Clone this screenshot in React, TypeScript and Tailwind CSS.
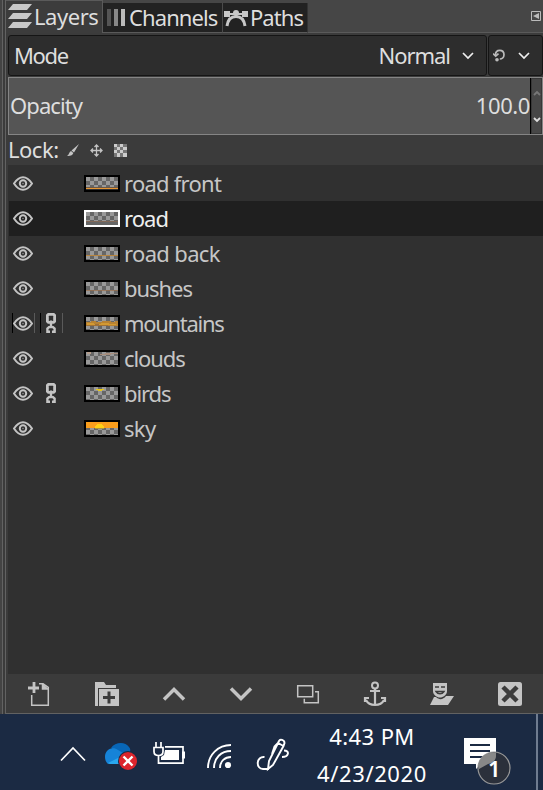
import React from "react";

const font = "font-['Noto_Sans',sans-serif]";

function Eye() {
  return (
    <svg width="20" height="15" viewBox="0 0 20 15" fill="none" stroke="#c4c4c4" strokeWidth="2">
      <path d="M1 7.5C4 3 7 1.2 10 1.2S16 3 19 7.5C16 12 13 13.8 10 13.8S4 12 1 7.5Z" />
      <circle cx="10" cy="7.5" r="3.2" />
      <circle cx="10" cy="7.5" r="0.7" fill="#aaa" stroke="none" />
    </svg>
  );
}

function Chain() {
  return (
    <svg width="10" height="20" viewBox="0 0 10 20" fill="none" stroke="#c4c4c4" strokeWidth="2.8">
      <path d="M2.4 1.4H7.6L8.6 2.4V8.4L7.6 9.4H2.4L1.4 8.4V2.4Z" />
      <path d="M5 7.5V14.5" strokeWidth="2.4" />
      <path d="M4 18.8H1.4V15.6L3 14.1H7L8.6 15.6V18.8H6" strokeWidth="2.4" />
    </svg>
  );
}

function Thumb({ name }: { name: string }) {
  const cells: React.ReactNode[] = [];
  for (let y = 0; y < 4; y++)
    for (let x = 0; x < 8; x++)
      cells.push(<rect key={`${x}-${y}`} x={2 + x * 4} y={2 + y * 4} width="4" height={y === 3 ? 1 : 4} fill={(x + y) % 2 ? "#666" : "#999"} />);
  return (
    <svg width="36" height="17" viewBox="0 0 36 17" shapeRendering="crispEdges" className="shrink-0">
      <rect width="36" height="17" fill={name === "road" ? "#fff" : "#000"} />
      {cells}
      {name === "road front" && <path d="M2 12h32v1H2z" fill="#6b5947" />}
      {name === "road front" && <path d="M2 13h32v1H2z" fill="#e79634" />}
      {name === "road front" && <path d="M2 14h32v1H2z" fill="#333" />}
      {name === "road" && <><path d="M2 11h32v4H2z" fill="#666" /><path d="M2 11h32v1H2z" fill="#806858" /></>}
      {name === "road back" && <path d="M2 10h32v1H2z" fill="#b7843e" />}
      {name === "bushes" && <path d="M2 10h32v1H2z" fill="#99704f" opacity=".75" />}
      {name === "mountains" && <><path d="M2 7h5v-1h5v1h6v-1h9v1h4v-1h3v5H2z" fill="#b88232" /><path d="M3 8h7v1h7v-1h8v1h7v1H3z" fill="#d39a32" /><path d="M2 10h9v-1h4v1h9v1H2z" fill="#a07034" /></>}
      {name === "clouds" && <><path d="M3 2h4v2H3z" fill="#b39b8a" /><path d="M16 4h5V3h13v1h-7v1H16z" fill="#a58c7c" /></>}
      {name === "birds" && <path d="M12 4h8v1h-2v1h-4V5h-2z" fill="#e8c715" />}
      {name === "sky" && <><path d="M2 2h32v6H2z" fill="#f99d1c" /><path d="M11 8V6h1V5h1V4h5v1h1v1h1v2z" fill="#ffcf15" /><path d="M11 8h9v1h-9z" fill="#a89342" /></>}
    </svg>
  );
}

const layers = [
  { name: "road front", track: "tracking-[-0.75px]" },
  { name: "road", track: "tracking-[-0.95px]" },
  { name: "road back", track: "tracking-[-0.65px]" },
  { name: "bushes", track: "tracking-[-1.05px]" },
  { name: "mountains", track: "tracking-[-1.3px]", chain: true, cells: true },
  { name: "clouds", track: "tracking-[-1.1px]" },
  { name: "birds", track: "tracking-[-1.1px]", chain: true },
  { name: "sky", track: "tracking-[-0.7px]" },
];

function Chevron() {
  return (
    <svg width="12" height="8" viewBox="0 0 12 8" fill="none" stroke="#eee" strokeWidth="1.7">
      <path d="M1 1L6 6L11 1" />
    </svg>
  );
}

function Tabs() {
  return (
    <div className="flex h-[33px] shrink-0 bg-[#464646] text-[22px] leading-[30px] text-[#dedede]">
      <div className="flex w-[97px] shrink-0 border-r border-t border-[#5a5a5a] bg-[#3c3c3c] pl-[2px]">
        <svg width="24" height="26" viewBox="0 0 24 26" className="mt-[2px]" fill="#c8c8c8">
          <path d="M5 1H24L19 7H0ZM5 10H24L19 16H0ZM5 19H24L19 25H0Z" />
        </svg>
        <span className="ml-[2px] tracking-[-0.45px]">Layers</span>
      </div>
      <div className="mt-[3px] flex w-[120px] shrink-0 border-b border-r border-b-[#5a5a5a] border-r-[#4b4b4b] bg-[#222] pl-[4px]">
        <svg width="18" height="17" viewBox="0 0 18 17" className="mt-[6px]">
          <path d="M0 0h4v17H0z" fill="#555" /><path d="M7 0h4v17H7z" fill="#888" /><path d="M14 0h4v17h-4z" fill="#bbb" />
        </svg>
        <span className="-mt-px ml-[4px] tracking-[-0.9px]">Channels</span>
      </div>
      <div className="mt-[3px] flex w-[85px] shrink-0 border-b border-r border-b-[#5a5a5a] border-r-[#333] bg-[#222] pl-px">
        <svg width="24" height="17" viewBox="0 0 24 17" className="mt-[7px]" fill="#c8c8c8">
          <path d="M0 1h6v6H0zM18 1h6v6h-6zM6 3h12v2H6z" /><circle cx="12" cy="3" r="3" />
          <path d="M3 16C4 9 8 6.5 12 6.5S20 9 21 16" fill="none" stroke="#c8c8c8" strokeWidth="3" />
        </svg>
        <span className="-mt-px ml-[2px] tracking-[-0.95px]">Paths</span>
      </div>
      <div className="flex flex-1 justify-end border-b border-[#5a5a5a] pr-[2px] pt-[11px]">
        <svg width="10" height="10" viewBox="0 0 10 10"><path d="M.5.5h9v9h-9z" fill="none" stroke="#bbb" /><path d="M8 2v6L2 5z" fill="#bbb" /></svg>
      </div>
    </div>
  );
}

function Controls() {
  return (
    <div className="shrink-0 pl-[2px] text-[22px] leading-[30px] text-[#dedede]">
      <div className="flex h-[44px] gap-px pt-[2px]">
        <div className="flex h-[41px] w-[479px] items-center rounded-[3px] border border-[#151515] bg-[#2d2d2d] pl-[5px] pr-[12px]">
          <span className="-mt-[2px] flex-1 tracking-[-1.35px]">Mode</span>
          <span className="-mt-[2px] mr-[12px] tracking-[-1.05px]">Normal</span>
          <Chevron />
        </div>
        <div className="flex h-[41px] flex-1 items-center rounded-[3px] border border-[#151515] bg-[#2d2d2d] pl-[4px]">
          <svg width="13" height="13" viewBox="0 0 13 13" fill="none" stroke="#bbb" strokeWidth="1.7">
            <path d="M2.5 6C2.5 2.8 4 1.3 6.7 1.3C9.5 1.3 11 3.4 11 5.8C11 8.3 9 10 6.8 10" /><path d="M0 4.7L2.7 7.2L5.5 4.7" /><circle cx="4" cy="10.7" r="1.8" fill="#bbb" stroke="none" />
          </svg>
          <span className="ml-[12px]"><Chevron /></span>
        </div>
      </div>
      <div className="flex h-[58px] border border-[#858585] bg-[#555]">
        <div className="flex flex-1 items-center justify-between border-r border-black pl-px">
          <span className="-mt-[2px] tracking-[-0.9px]">Opacity</span><span className="-mt-[2px] tracking-[-0.4px]">100.0</span>
        </div>
        <div className="flex w-[11px] flex-col items-center border border-[#373737] bg-[#474747] pt-[11px]">
          <svg width="8" height="34" viewBox="0 0 8 34" fill="none" strokeWidth="1.8"><path d="M1 5L4 2L7 5" stroke="#777" /><path d="M1 28L4 31L7 28" stroke="#ddd" /></svg>
        </div>
      </div>
      <div className="flex h-[30px] items-center">
        <span className="-mt-[2px] w-[58px] tracking-[-0.5px]">Lock:</span>
        <svg width="14" height="14" viewBox="0 0 14 14" fill="#c4c4c4"><path d="M13 1L8 9.5L5.5 7.5ZM5 8L7.3 10C7 12 4 13.5 1 13C3 12 3 9 5 8Z" /></svg>
        <svg width="13" height="13" viewBox="0 0 13 13" className="ml-[10px]" fill="none" stroke="#c4c4c4" strokeWidth="1.3"><path d="M6.5 1v11M1 6.5h11M4.5 3l2-2l2 2M4.5 10l2 2l2-2M3 4.5l-2 2l2 2M10 4.5l2 2l-2 2" /></svg>
        <svg width="13" height="13" viewBox="0 0 13 13" className="ml-[11px]"><path d="M0 0h13v13H0z" fill="#777" /><path d="M0 0h3v3H0zM6 0h3v3H6zM3 3h3v3H3zM9 3h4v3H9zM0 6h3v3H0zM6 6h3v3H6zM3 9h3v4H3zM9 9h4v4H9z" fill="#ccc" /></svg>
      </div>
    </div>
  );
}

function Toolbar() {
  return (
    <div className="flex h-[40px] shrink-0 border-b border-[#626262] bg-[#3b3b3b] pl-[20px] pt-[7px]">
      <svg width="517" height="26" viewBox="26 681 517 26" fill="none" stroke="#c4c4c4" strokeWidth="1.5">
        <path d="M34 682v11M28 688h11" strokeWidth="2.8" />
        <path d="M31.7 695v10.3H48.3V687.5L43 683.7H39M42.5 684v5H48" />
        <path d="M43 683.5V689H48.5Z" fill="#c4c4c4" stroke="none" />
        <path d="M95 682h9l2 3h10v3H98v18h-3zM99 689h20v17H99z" fill="#c4c4c4" stroke="none" />
        <path d="M109 691.5v12M103 697.5h12" stroke="#3b3b3b" strokeWidth="3" />
        <path d="M164 699.5L174 689.5L184 699.5M231 688.5L241 698.5L251 688.5" strokeWidth="3.5" />
        <path d="M297.7 685.7h15v11h-15zM315 691.7h3.3v11h-14v-4" />
        <circle cx="375" cy="685.5" r="3" strokeWidth="2" />
        <path d="M375 689v15M370 691h10M366 700C368 704 371 705 375 705S382 704 384 700M365 702V698h4M385 702V698h-4" strokeWidth="2.2" />
        <path d="M433 683h14v8c0 4-4 6.5-7 6.5s-7-2.5-7-6.5zM434 697h2c3 3 7 3 10-1h8l-6 9h-18z" fill="#c4c4c4" stroke="none" />
        <path d="M435 687h4M441 687h4M436 691.5c2 3 6 3 8 0z" stroke="#3b3b3b" strokeWidth="1.4" />
        <rect x="498" y="682" width="24" height="24" rx="2.5" fill="#c4c4c4" stroke="none" />
        <path d="M503 687L517 701M517 687L503 701" stroke="#3b3b3b" strokeWidth="4.5" />
      </svg>
    </div>
  );
}

function Taskbar() {
  return (
    <div className="flex h-[76px] shrink-0 bg-[#1b2a43] text-white">
      <svg width="300" height="76" viewBox="0 714 300 76" fill="none" stroke="#fff" strokeWidth="1.7" className="shrink-0">
        <path d="M61 760.5L73 748L85 760.5" />
        <g stroke="none">
          <path d="M111 748C115 742 125 741 129 747C131 749 130 751 130 753L119 755Z" fill="#0866b7" />
          <path d="M105 757C105 749 113 746 118 750L128 756L108 764C106 762 105 760 105 757Z" fill="#1683d8" />
          <path d="M108 763L120 757L126 764H112C110 764 109 764 108 763Z" fill="#2aa8ef" />
          <circle cx="128" cy="761" r="10" fill="#1b2a43" /><circle cx="128" cy="761" r="9" fill="#dc252d" />
        </g>
        <path d="M123.5 756.5L132.5 765.5M132.5 756.5L123.5 765.5" strokeWidth="2.4" />
        <path d="M156 742v5M161 742v5M154 747.5h9v4c0 3-2 4-4.5 4s-4.5-1-4.5-4zM158.5 756v8M163 763.2h20v-16.4h-18M158.5 763.2h5" />
        <path d="M165 750h14v10h-18v-3l3-2z" fill="#fff" stroke="none" /><path d="M183.5 751.5v7" strokeWidth="3" />
        <path d="M208 768C208 755 218 745 231 745M214 768C214 758 221 751 231 751M220 768C220 761 225 757 231 757" strokeWidth="1.9" />
        <circle cx="228" cy="765" r="3.1" fill="#fff" stroke="none" />
        <path d="M268 769L269 761L279 741C280 738.5 284.5 740 284.5 743L283.5 746L273 765ZM278 743L283.5 746M272 754L274.5 746.5L278 743M264.5 757C256 756 255.5 769 263 769H269M284 750.5C290 750.5 289 757 282 757" strokeWidth="1.9" />
      </svg>
      <div className={`flex w-[144px] shrink-0 flex-col items-center pt-[4px] text-[22px] leading-[37px] ${font}`}>
        <span className="tracking-[0.4px]">4:43 PM</span><span className="tracking-[0.6px]">4/23/2020</span>
      </div>
      <div className="relative ml-[20px] w-[72px] pt-[24px]">
        <svg width="50" height="50" viewBox="0 0 50 50" fill="none">
          <path d="M0 0h32v26H17l-5 5V26H0z" fill="#fff" /><path d="M6 7h20M6 13h20M6 19h20" stroke="#1b2a43" strokeWidth="2" />
          <circle cx="30" cy="30" r="16" fill="#2b303b" stroke="#999" strokeWidth="1.2" />
          <path d="M14.7 26C16 19 23 13.5 32 14.8V18C32 22 29 25 24 26L15 31Z" fill="#888" />
        </svg>
        <span className="absolute left-[24px] top-[40px] font-['Noto_Sans',sans-serif] text-[22px] font-semibold leading-[28px]">1</span>
      </div>
      <div className="w-[2px] bg-[#6f7c90]" />
    </div>
  );
}

export default function App() {
  return (
    <div className={`flex h-[790px] w-[543px] flex-col overflow-hidden bg-[#3b3b3b] ${font}`}>
      <div className="flex h-[714px] shrink-0">
        <div className="flex w-[6px] shrink-0 bg-[#3b3b3b]"><div className="w-[3px] border-r border-[#626262] bg-[#444]" /><div className="w-[3px] border-r border-[#626262]" /></div>
        <div className="flex min-w-0 flex-1 flex-col">
          <Tabs />
          <Controls />
          <div className="ml-[2px] flex-1 bg-[#303030]">
            {layers.map((layer) => (
              <div key={layer.name} className={`ml-px flex h-[35px] ${layer.name === "road front" ? "mt-[1px]" : ""} ${layer.name === "road" ? "bg-[#1f1f1f] text-[#eee]" : "text-[#c6c6c6]"}`}>
                <div className={`ml-[3px] mt-[7px] flex h-[20px] w-[23px] items-center border-l border-r ${layer.cells ? "border-l-black border-r-[#5a5a5a]" : "border-transparent"}`}><Eye /></div>
                <div className={`ml-[5px] mt-[7px] flex h-[20px] w-[23px] items-center border-l border-r pl-[5px] ${layer.cells ? "border-l-black border-r-[#5a5a5a]" : "border-transparent"}`}>{layer.chain && <Chain />}</div>
                <div className="ml-[21px] mt-[9px]"><Thumb name={layer.name} /></div>
                <span className={`ml-[4px] mt-[2px] whitespace-nowrap text-[22px] leading-[30px] ${layer.track}`}>{layer.name}</span>
              </div>
            ))}
          </div>
          <Toolbar />
        </div>
      </div>
      <Taskbar />
    </div>
  );
}
